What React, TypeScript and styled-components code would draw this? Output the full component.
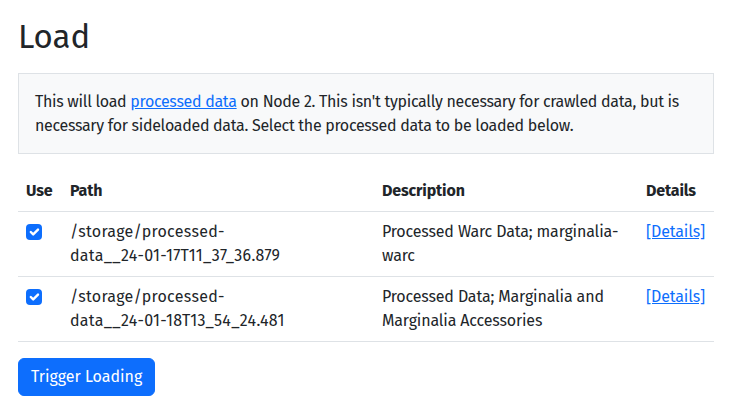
import styled, { createGlobalStyle } from 'styled-components'

const GlobalStyle = createGlobalStyle`
  body {
    margin: 0;
    background: #fff;
    color: #212529;
    font-family: 'Fira Sans', Roboto, 'Noto Sans', sans-serif;
    font-size: 16px;
    line-height: 1.5;
    letter-spacing: -0.15px;
  }
`

const Page = styled.div`
  max-width: 696px;
  padding: 17px 18px 0;
`

const Title = styled.h1`
  margin: 0 0 16px;
  font-size: 33px;
  font-weight: 400;
  line-height: 40px;
  letter-spacing: 0;
`

const Notice = styled.div`
  background: #f8f9fa;
  border: 1px solid #dee2e6;
  padding: 15.5px 16px;
  margin-bottom: 17px;
  letter-spacing: -0.3px;
`

const Link = styled.a`
  color: #0d6efd;
  text-decoration: underline;
`

const Table = styled.table`
  width: 100%;
  border-collapse: collapse;
  margin-bottom: 16px;
`

const HeadCell = styled.th<{ $width: number }>`
  width: ${({ $width }) => $width}px;
  padding: 8px;
  text-align: left;
  font-weight: 700;
  border-bottom: 1px solid #dee2e6;
  box-sizing: border-box;
`

const Cell = styled.td`
  padding: 8px;
  vertical-align: top;
  border-bottom: 1px solid #dee2e6;
`

const PathCell = styled(Cell)`
  letter-spacing: 0.3px;
`

const NoBreak = styled.span`
  white-space: nowrap;
`

const Check = styled.span`
  display: block;
  width: 16px;
  height: 16px;
  margin-top: 4px;
  border-radius: 4px;
  background: #0d6efd;
  svg {
    display: block;
  }
`

const Button = styled.button`
  font-family: inherit;
  font-size: 16px;
  line-height: 1.5;
  letter-spacing: 0;
  color: #fff;
  background: #0d6efd;
  border: 1px solid #0d6efd;
  border-radius: 6px;
  padding: 6px 12px;
`

const rows = [
  {
    path: ['/storage/processed-', 'data__24-01-17T11_37_36.879'],
    description: ['Processed Warc Data; marginalia-', 'warc']
  },
  {
    path: ['/storage/processed-', 'data__24-01-18T13_54_24.481'],
    description: ['Processed Data; Marginalia and ', 'Marginalia Accessories']
  }
]

const CheckBox = () => (
  <Check>
    <svg width="16" height="16" viewBox="0 0 20 20">
      <path fill="none" stroke="#fff" strokeLinecap="round" strokeLinejoin="round" strokeWidth="3" d="m6 10 3 3 6-6" />
    </svg>
  </Check>
)

export default function App() {
  return (
    <>
      <GlobalStyle />
      <Page>
        <Title>Load</Title>
        <Notice>
          This will load <Link href="#">processed data</Link> on Node 2. This isn't typically necessary for crawled
          data, but is necessary for sideloaded data. Select the processed data to be loaded below.
        </Notice>
        <Table>
          <thead>
            <tr>
              <HeadCell $width={44}>Use</HeadCell>
              <HeadCell $width={312}>Path</HeadCell>
              <HeadCell $width={264}>Description</HeadCell>
              <HeadCell $width={76}>Details</HeadCell>
            </tr>
          </thead>
          <tbody>
            {rows.map((row) => (
              <tr key={row.path[1]}>
                <Cell>
                  <CheckBox />
                </Cell>
                <PathCell>
                  {row.path[0]}
                  <NoBreak>{row.path[1]}</NoBreak>
                </PathCell>
                <Cell>
                  {row.description[0]}
                  <NoBreak>{row.description[1]}</NoBreak>
                </Cell>
                <Cell>
                  <Link href="#">[Details]</Link>
                </Cell>
              </tr>
            ))}
          </tbody>
        </Table>
        <Button>Trigger Loading</Button>
      </Page>
    </>
  )
}
